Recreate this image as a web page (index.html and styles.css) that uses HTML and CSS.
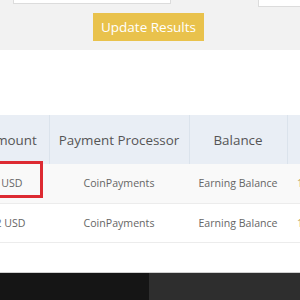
FILE: index.html
```html
<!DOCTYPE html>
<html lang="en">
<head>
  <meta charset="UTF-8" />
  <meta name="viewport" content="width=device-width, initial-scale=1.0"/>
  <title>Withdrawals</title>
  <link rel="stylesheet" href="styles.css">
</head>
<body>
  <!-- Filter bar -->
  <div class="filters">
    <div class="filter-row">
      <input class="field field-from" type="text">
      <input class="field field-to" type="text">
    </div>
    <button class="update-btn">Update Results</button>
  </div>

  <!-- Withdrawals table -->
  <div class="history">
    <table class="history-table">
      <thead>
        <tr>
          <th class="col-amount">Amount</th>
          <th class="col-processor">Payment Processor</th>
          <th class="col-balance">Balance</th>
          <th class="col-date">Date</th>
        </tr>
      </thead>
      <tbody>
        <tr>
          <td class="col-amount"><span class="mark"></span>0.01 USD</td>
          <td>CoinPayments</td>
          <td>Earning Balance</td>
          <td class="col-date">1 day ago</td>
        </tr>
        <tr>
          <td class="col-amount">0.012 USD</td>
          <td>CoinPayments</td>
          <td>Earning Balance</td>
          <td class="col-date">1 day ago</td>
        </tr>
      </tbody>
    </table>
  </div>

  <div class="footer">
    <div class="footer-left"></div>
    <div class="footer-right"></div>
  </div>
</body>
</html>
```

FILE: styles.css
```css
body {
  margin: 0;
  font-family: 'Open Sans', sans-serif;
  background: #fff;
  overflow: hidden;
}

.filters {
  background: #f2f2f2;
  height: 50px;
  overflow: hidden;
}

.filter-row {
  display: flex;
  align-items: flex-end;
  margin-top: -30px;
  height: 37px;
}

.field {
  box-sizing: border-box;
  background: #fff;
  border: 1px solid #dcdcdc;
  padding: 0;
}

.field-from {
  margin-left: 13px;
  width: 158px;
  height: 34px;
  margin-bottom: 3px;
}

.field-to {
  margin-left: 87px;
  width: 80px;
  height: 37px;
}

.update-btn {
  display: block;
  margin: 6px 0 0 93px;
  width: 111px;
  height: 28px;
  padding: 0;
  border: none;
  background: #e9c24c;
  color: #fff;
  font-family: 'Open Sans', sans-serif;
  font-size: 13.5px;
}

.history {
  margin-top: 65px;
  height: 157px;
  border-bottom: 1px solid #d0d0d0;
  overflow: hidden;
}

.history-table {
  margin-left: -41px;
  border-collapse: collapse;
  table-layout: fixed;
  width: 468px;
}

.history-table th,
.history-table td {
  box-sizing: border-box;
  padding: 0;
}

.history-table th {
  height: 49px;
  background: #e9eef5;
  border-right: 1px solid #dbe3ec;
  color: #555;
  font-size: 13.4px;
  font-weight: normal;
  text-align: center;
}

.history-table th.col-amount {
  padding-left: 16px;
}

.history-table td {
  height: 39px;
  color: #666;
  font-size: 10.6px;
  text-align: center;
  border-bottom: 1px solid #ececec;
}

.history-table td.col-amount {
  padding-right: 8px;
}

.history-table tbody tr:nth-child(odd) td {
  background: #f9f9f9;
}

.col-amount {
  width: 90px;
  position: relative;
}

.col-processor {
  width: 140px;
}

.col-balance {
  width: 98px;
}

.col-date {
  width: 140px;
}

.history-table td.col-date {
  text-align: left;
  padding-left: 10px;
  color: #b8a160;
}

/* red highlight frame over the first amount */
.mark {
  position: absolute;
  left: -10px;
  top: -3px;
  width: 94px;
  height: 37px;
  border: 3px solid #dd2a32;
  box-sizing: border-box;
}

.footer {
  display: flex;
  height: 30px;
}

.footer-left {
  width: 149px;
  background: #151515;
}

.footer-right {
  flex: 1;
  background: #2e2e2e;
}
```
